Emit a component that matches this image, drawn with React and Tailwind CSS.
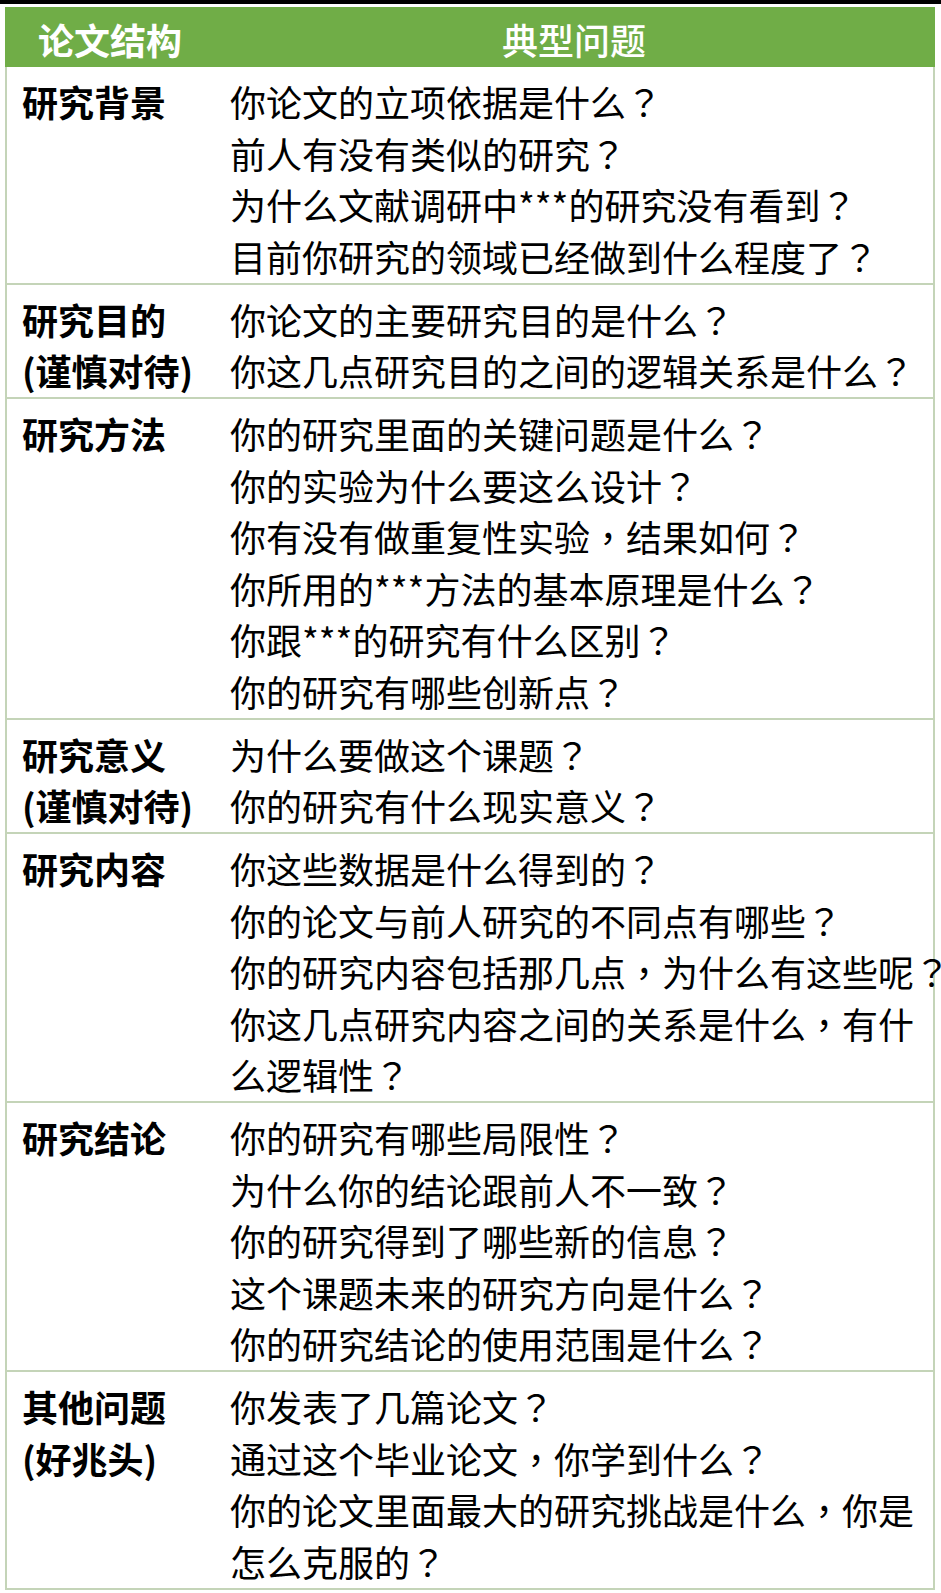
const rows = [
    {
        title: ['研究背景'],
        questions: [
            '你论文的立项依据是什么？',
            '前人有没有类似的研究？',
            '为什么文献调研中***的研究没有看到？',
            '目前你研究的领域已经做到什么程度了？',
        ],
    },
    {
        title: ['研究目的', '(谨慎对待)'],
        questions: ['你论文的主要研究目的是什么？', '你这几点研究目的之间的逻辑关系是什么？'],
    },
    {
        title: ['研究方法'],
        questions: [
            '你的研究里面的关键问题是什么？',
            '你的实验为什么要这么设计？',
            '你有没有做重复性实验，结果如何？',
            '你所用的***方法的基本原理是什么？',
            '你跟***的研究有什么区别？',
            '你的研究有哪些创新点？',
        ],
    },
    {
        title: ['研究意义', '(谨慎对待)'],
        questions: ['为什么要做这个课题？', '你的研究有什么现实意义？'],
    },
    {
        title: ['研究内容'],
        questions: [
            '你这些数据是什么得到的？',
            '你的论文与前人研究的不同点有哪些？',
            { text: '你的研究内容包括那几点，为什么有这些呢？', nowrap: true },
            '你这几点研究内容之间的关系是什么，有什么逻辑性？',
        ],
    },
    {
        title: ['研究结论'],
        questions: [
            '你的研究有哪些局限性？',
            '为什么你的结论跟前人不一致？',
            '你的研究得到了哪些新的信息？',
            '这个课题未来的研究方向是什么？',
            '你的研究结论的使用范围是什么？',
        ],
    },
    {
        title: ['其他问题', '(好兆头)'],
        questions: ['你发表了几篇论文？', '通过这个毕业论文，你学到什么？', '你的论文里面最大的研究挑战是什么，你是怎么克服的？'],
    },
];

// full-width punctuation sits centred in its cell in the original, like the TC cut
function Question({ text }) {
    const parts = text.split(/([，？])/);
    return parts.map((p, i) =>
        p === '，' || p === '？' ? (
            <span key={i} className="font-['Noto_Sans_CJK_TC',sans-serif]">
                {p}
            </span>
        ) : (
            p
        )
    );
}

export default function App() {
    return (
        <div className="min-h-screen w-full overflow-hidden bg-white font-['Noto_Sans_CJK_SC',sans-serif] text-black">
            <div className="h-[4px] bg-black" />
            <div className="ml-[5px] mt-[3px] w-[930px]">
                {/* header */}
                <div className="flex h-[60px] items-center bg-[#70ad47] pt-[4px] text-[36px] leading-none text-white">
                    <div className="w-[208px] pl-[33px] font-bold">论文结构</div>
                    <div className="flex-1 text-center font-medium">典型问题</div>
                </div>

                {rows.map((row, i) => (
                    <div key={i} className="flex border-x-2 border-b-2 border-[#c4d4b8] pt-[9px] pb-[0.5px] text-[36px] leading-[51.5px]">
                        <div className="w-[223px] shrink-0 pl-[15px] font-bold">
                            {row.title.map((t) => (
                                <div key={t}>{t}</div>
                            ))}
                        </div>
                        <div className="min-w-0 flex-1">
                            {row.questions.map((q) => {
                                const text = typeof q === 'string' ? q : q.text;
                                const nowrap = typeof q !== 'string' && q.nowrap;
                                return (
                                    <div key={text} className={nowrap ? 'whitespace-nowrap' : ''}>
                                        <Question text={text} />
                                    </div>
                                );
                            })}
                        </div>
                    </div>
                ))}
            </div>
        </div>
    );
}
